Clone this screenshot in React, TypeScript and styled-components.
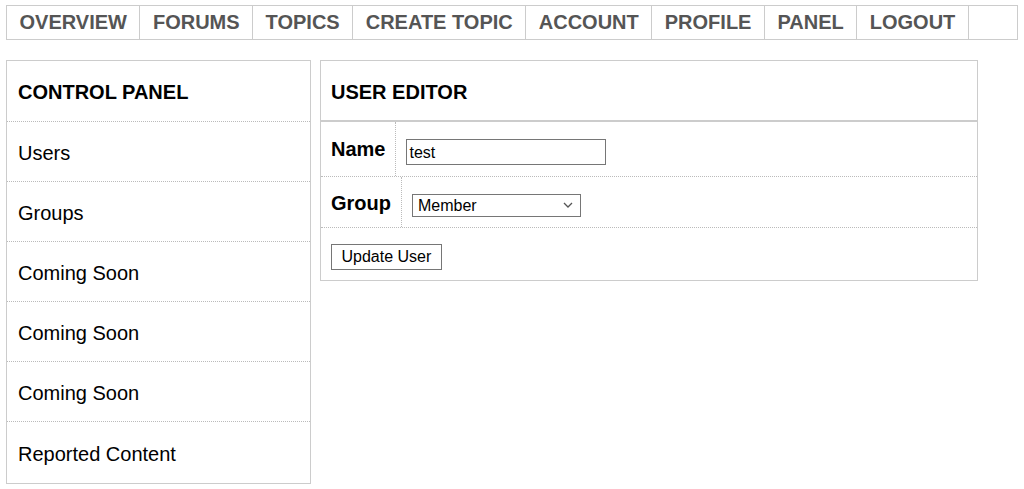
import styled, { createGlobalStyle } from 'styled-components';

const GlobalStyle = createGlobalStyle`
  body {
    margin: 0;
    background: #fff;
    font-family: "Liberation Sans", Arial, sans-serif;
    color: #000;
  }
`;

const Page = styled.div`
  padding: 5px 6px;
`;

const Nav = styled.nav`
  display: flex;
  border: 1px solid #ccc;
  height: 33px;
`;

const NavItem = styled.a`
  display: block;
  padding: 0 12.5px;
  line-height: 33px;
  font-size: 20px;
  font-weight: bold;
  color: #555;
  text-decoration: none;
  border-right: 1px solid #ccc;
`;

const Main = styled.div`
  display: flex;
  align-items: flex-start;
  gap: 9px;
  margin-top: 20px;
`;

const Panel = styled.div<{ $width: number }>`
  width: ${({ $width }) => $width}px;
  box-sizing: border-box;
  border: 1px solid #ccc;
`;

const SideHeader = styled.div`
  padding: 3px 11px 0;
  line-height: 57px;
  font-size: 20px;
  font-weight: bold;
  border-bottom: 1px dotted #bbb;
`;

const SideRow = styled.div`
  padding: 3px 11px 0;
  line-height: 56px;
  font-size: 20px;
  border-bottom: 1px dotted #bbb;

  &:last-child {
    border-bottom: none;
    line-height: 58px;
  }
`;

const EditorHeader = styled.div`
  padding: 4px 10px 0;
  line-height: 55px;
  font-size: 20px;
  font-weight: bold;
  border-bottom: 2px solid #ccc;
`;

const FieldRow = styled.div`
  display: flex;
  border-bottom: 1px dotted #bbb;
`;

const Label = styled.div<{ $height: number; $shift: number }>`
  padding: ${({ $shift }) => $shift}px 10px 0;
  line-height: ${({ $height, $shift }) => $height - $shift}px;
  font-size: 20px;
  font-weight: bold;
  border-right: 1px dotted #bbb;
`;

const FieldCell = styled.div<{ $top: number; $left: number }>`
  padding: ${({ $top, $left }) => `${$top}px 10px 0 ${$left}px`};
`;

const TextInput = styled.input`
  box-sizing: border-box;
  width: 200px;
  height: 26px;
  padding: 1px 2px 0;
  border: 1px solid #767676;
  border-radius: 0;
  font-family: "Liberation Sans", Arial, sans-serif;
  font-size: 16px;
  color: #000;
`;

const SelectWrap = styled.div`
  position: relative;
  width: 169px;
  height: 23px;

  svg {
    position: absolute;
    right: 8px;
    top: 8px;
    pointer-events: none;
  }
`;

const Select = styled.select`
  appearance: none;
  box-sizing: border-box;
  width: 169px;
  height: 23px;
  padding: 0 5px;
  border: 1px solid #767676;
  border-radius: 0;
  background: #fff;
  font-family: "Liberation Sans", Arial, sans-serif;
  font-size: 16px;
  color: #000;
`;

const ButtonRow = styled.div`
  padding: 16px 10px 10px;
`;

const Button = styled.button`
  box-sizing: border-box;
  height: 26px;
  padding: 0 9.5px;
  border: 1px solid #767676;
  border-radius: 0;
  background: #fff;
  font-family: "Liberation Sans", Arial, sans-serif;
  font-size: 16px;
  color: #000;
`;

const navLinks = ['OVERVIEW', 'FORUMS', 'TOPICS', 'CREATE TOPIC', 'ACCOUNT', 'PROFILE', 'PANEL', 'LOGOUT'];
const sideLinks = ['Users', 'Groups', 'Coming Soon', 'Coming Soon', 'Coming Soon', 'Reported Content'];

export default function App() {
  return (
    <Page>
      <GlobalStyle />
      <Nav>
        {navLinks.map((link) => (
          <NavItem key={link} href="#">{link}</NavItem>
        ))}
      </Nav>
      <Main>
        <Panel $width={305}>
          <SideHeader>CONTROL PANEL</SideHeader>
          {sideLinks.map((link, i) => (
            <SideRow key={i}>{link}</SideRow>
          ))}
        </Panel>
        <Panel $width={658}>
          <EditorHeader>USER EDITOR</EditorHeader>
          <FieldRow>
            <Label $height={54} $shift={0}>Name</Label>
            <FieldCell $top={17} $left={10}>
              <TextInput defaultValue="test" />
            </FieldCell>
          </FieldRow>
          <FieldRow>
            <Label $height={50} $shift={3}>Group</Label>
            <FieldCell $top={17} $left={10}>
              <SelectWrap>
                <Select defaultValue="member">
                  <option value="member">Member</option>
                  <option value="admin">Administrator</option>
                </Select>
                <svg width="10" height="6" viewBox="0 0 10 6">
                  <path d="M1 1 L5 5 L9 1" fill="none" stroke="#555" strokeWidth="1.3" />
                </svg>
              </SelectWrap>
            </FieldCell>
          </FieldRow>
          <ButtonRow>
            <Button>Update User</Button>
          </ButtonRow>
        </Panel>
      </Main>
    </Page>
  );
}
